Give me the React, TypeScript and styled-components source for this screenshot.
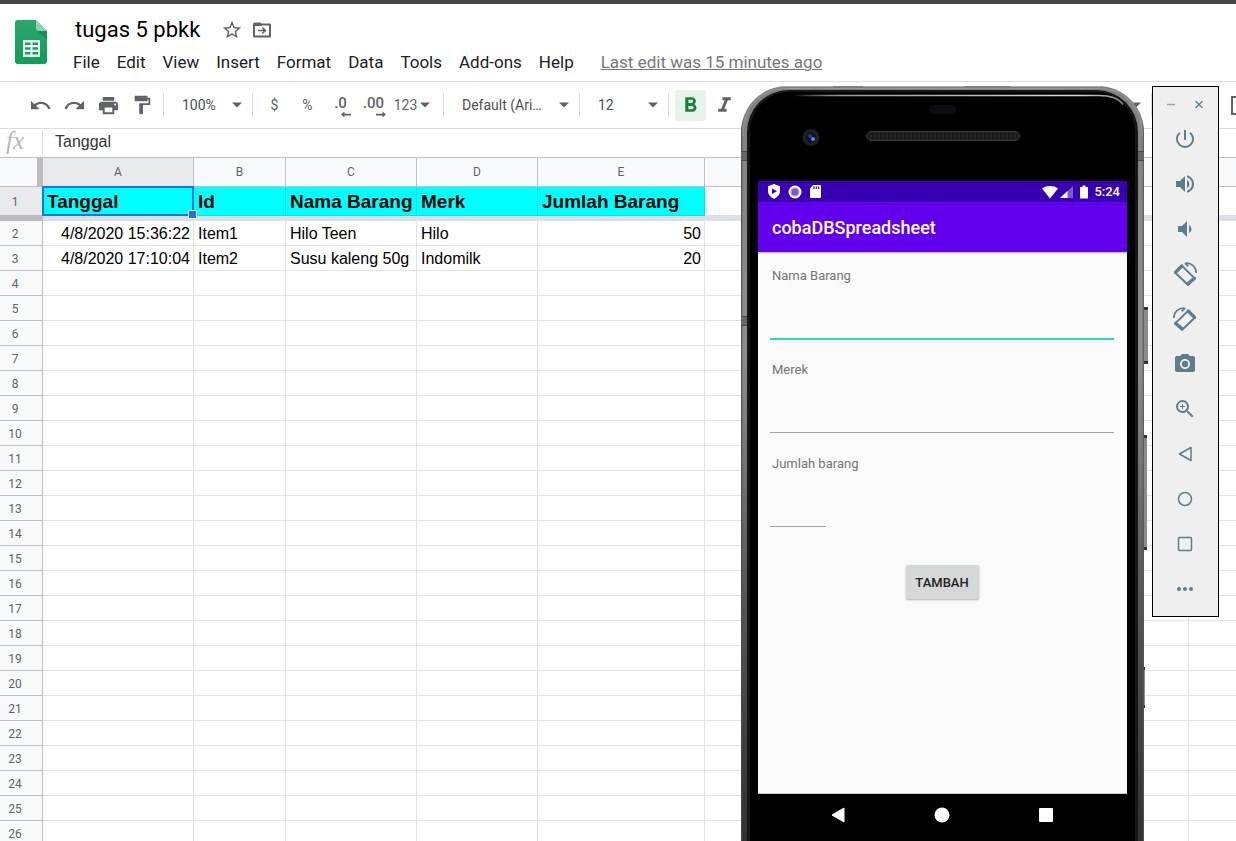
import React from "react";
import styled, { createGlobalStyle, css } from "styled-components";
import {
  MdUndo,
  MdRedo,
  MdPrint,
  MdFormatPaint,
  MdFormatBold,
  MdFormatItalic,
  MdStarBorder,
  MdPowerSettingsNew,
  MdVolumeUp,
  MdVolumeDown,
  MdPhotoCamera,
  MdZoomIn,
} from "react-icons/md";

const GlobalStyle = createGlobalStyle`
  *, *::before, *::after { box-sizing: border-box; }
  body { margin: 0; background: #fff; font-family: Roboto, "Liberation Sans", sans-serif; }
  button, input, select { font: inherit; color: inherit; margin: 0; padding: 0; border: 0; background: none; outline: 0; }
  svg { display: block; }
`;

const Page = styled.div`
  position: relative;
  display: flex;
  flex-direction: column;
  height: 100vh;
  overflow: hidden;
  border-top: 4px solid #444;
`;

/* ---------- header ---------- */

const Header = styled.header`
  display: flex;
  flex: none;
  height: 78px;
  padding: 12px 15px 0;
  gap: 26px;
  border-bottom: 1px solid #dadce0;
`;

const Logo = styled.svg`
  flex: none;
  width: 32px;
  height: 44px;
  margin-top: 4px;
`;

const HeaderText = styled.div`
  display: flex;
  flex-direction: column;
  gap: 4px;
`;

const TitleRow = styled.div`
  display: flex;
  align-items: center;
  height: 28px;
  gap: 9px;
`;

const Title = styled.h1`
  margin: 0 12px 0 2px;
  font-size: 22px;
  line-height: 28px;
  font-weight: 400;
  color: #000;
`;

const IconButton = styled.button`
  display: flex;
  align-items: center;
  justify-content: center;
  color: #5f6368;
`;

const MenuBar = styled.nav`
  display: flex;
  align-items: center;
  height: 28px;
  gap: 17px;
  white-space: nowrap;
`;

const MenuItem = styled.button`
  font-size: 17px;
  line-height: 28px;
  color: #202124;
`;

const LastEdit = styled.a`
  margin-left: 10px;
  font-size: 17px;
  line-height: 28px;
  color: #777;
  text-decoration: underline;
  text-decoration-thickness: 1px;
`;

/* ---------- toolbar ---------- */

const Toolbar = styled.div`
  display: flex;
  flex: none;
  align-items: center;
  height: 47px;
  padding-left: 23px;
  border-bottom: 1px solid #dadce0;
  font-size: 14px;
  color: #5f6368;
`;

const ToolButton = styled.button<{ $width?: number; $active?: boolean }>`
  display: flex;
  flex: none;
  align-items: center;
  justify-content: center;
  width: ${(p) => p.$width ?? 34}px;
  height: 31px;
  border-radius: 3px;
  gap: 3px;
  ${(p) =>
    p.$active &&
    css`
      background: #e6f4ea;
      color: #188038;
    `}
`;

const Divider = styled.span`
  flex: none;
  width: 1px;
  height: 24px;
  background: #dadce0;
`;

const ToolGroup = styled.div<{ $left?: number; $right?: number }>`
  display: flex;
  flex: none;
  align-items: center;
  padding: 0 ${(p) => p.$right ?? 0}px 0 ${(p) => p.$left ?? 0}px;
`;

const SelectBox = styled.label<{ $width: number }>`
  display: flex;
  flex: none;
  align-items: center;
  width: ${(p) => p.$width}px;
  padding: 0 10px 0 18px;
`;

const Select = styled.select`
  flex: 1;
  min-width: 0;
  appearance: none;
  font-size: 14px;
  line-height: 20px;
  color: #4d5156;
`;

const Decimals = styled.span<{ $overhang: number }>`
  display: flex;
  flex-direction: column;
  align-items: flex-end;
  height: 22px;
  margin-top: 4px;
  font-size: 15px;
  font-weight: 500;
  line-height: 15px;

  svg {
    margin-right: -${(p) => p.$overhang}px;
  }
`;

const RightTools = styled.div`
  display: flex;
  align-items: center;
  gap: 10px;
  margin-left: auto;
  margin-right: -14px;
`;

const Spacer = styled.span`
  width: 59px;
`;

const Arrow = () => (
  <svg width="10" height="6" viewBox="0 0 10 6" fill="#5f6368" aria-hidden="true">
    <path d="M0 .5h10L5 5.5z" />
  </svg>
);

/* ---------- formula bar ---------- */

const FormulaBar = styled.label`
  display: flex;
  flex: none;
  align-items: center;
  height: 29px;
  border-bottom: 1px solid #c0c0c0;
`;

const Fx = styled.span`
  width: 42px;
  padding: 0 0 4px 6px;
  font: italic 25px/24px "Liberation Serif", serif;
  color: #b7b9bc;
`;

const FormulaInput = styled.input`
  flex: 1;
  padding: 0 0 2px 12px;
  font: 16px/20px "Liberation Sans", sans-serif;
  color: #333;
`;

/* ---------- sheet ---------- */

const Sheet = styled.main`
  flex: 1;
  min-height: 0;
  overflow: hidden;
`;

const Table = styled.table`
  width: 100%;
  table-layout: fixed;
  border-collapse: separate;
  border-spacing: 0;
  white-space: nowrap;
`;

const headCell = css`
  padding: 0;
  font: 12px/14px Roboto, "Liberation Sans", sans-serif;
  color: #5f6368;
  text-align: center;
  border-right: 1px solid #c0c0c0;
`;

const ColHead = styled.th<{ $selected?: boolean }>`
  ${headCell}
  height: 29px;
  border-bottom: 1px solid #c0c0c0;
  background: ${(p) => (p.$selected ? "#e8eaed" : "#f8f9fa")};

  &:last-child {
    border-right: 0;
  }
`;

const Corner = styled.td`
  height: 29px;
  background: #f8f9fa;
  border-right: 6px solid #bcbcbc;
  border-bottom: 1px solid #c0c0c0;
`;

const RowHead = styled.th<{ $selected?: boolean }>`
  ${headCell}
  height: ${(p) => (p.$selected ? 29 : 25)}px;
  padding: 2px 12px 0 0;
  border-bottom: 1px solid ${(p) => (p.$selected ? "#bcbcbc" : "#c0c0c0")};
  background: ${(p) => (p.$selected ? "#e8eaed" : "#f8f9fa")};
`;

const Cell = styled.td<{ $right?: boolean }>`
  padding: 2px 3px 0 4px;
  font: 16px/20px "Liberation Sans", sans-serif;
  color: #000;
  text-align: ${(p) => (p.$right ? "right" : "left")};
  border-right: 1px solid #e2e2e2;
  border-bottom: 1px solid #e2e2e2;

  &:last-child {
    border-right: 0;
  }
`;

const TitleCell = styled(Cell)`
  position: relative;
  font-size: 19px;
  font-weight: 700;
  line-height: 22px;
  background: #0ff;
  border-color: #00e4e6;
`;

const FirstRowCell = styled(Cell)`
  border-right-color: #fff;
  border-bottom-color: #dadfe8;
`;

const Selection = styled.span`
  position: absolute;
  inset: -1px -1px -1px -1px;
  z-index: 1;
  border: 2px solid #1a73e8;

  &::after {
    content: "";
    position: absolute;
    right: -5px;
    bottom: -5px;
    width: 9px;
    height: 9px;
    background: #1a73e8;
    border: 1px solid #fff;
  }
`;

const FreezeBar = styled.td<{ $head?: boolean }>`
  height: 5px;
  padding: 0;
  background: ${(p) => (p.$head ? "#bcbcbc" : "#dadfe8")};
`;

/* ---------- emulator ---------- */

const Emulator = styled.aside`
  position: absolute;
  top: 82px;
  right: 17px;
  bottom: 0;
  z-index: 2;
  display: flex;
  align-items: flex-start;
  gap: 8px;
`;

const Phone = styled.section`
  position: relative;
  width: 403px;
  height: 100%;
`;

const SideButton = styled.span<{ $top: number; $height: number; $width: number }>`
  position: absolute;
  left: 100%;
  top: ${(p) => p.$top}px;
  width: ${(p) => p.$width}px;
  height: ${(p) => p.$height}px;
  background: #8c8c8c;
  border: solid #333;
  border-width: 3px 0;
`;

const Antenna = styled.span<{ $top: number; $side: "left" | "right" }>`
  position: absolute;
  top: ${(p) => p.$top}px;
  ${(p) => p.$side}: 0;
  width: 6px;
  height: 10px;
  background: #666;
  border: solid #4a4a4a;
  border-width: 1px 0;
`;

const Frame = styled.div`
  height: 100%;
  padding: 4px 6px 0;
  border-radius: 46px 46px 0 0;
  background: linear-gradient(90deg, #4a4a4a 0, transparent 2px, transparent 401px, #555 403px),
    linear-gradient(#808080 0, #8e8e8e 35%, #5a5a5a 65%, #303030 100%);
`;

const Body = styled.div`
  height: 100%;
  padding: 0 8px;
  border: solid #161616;
  border-width: 2px 3px 0;
  border-radius: 42px 42px 0 0;
  background: #000;
`;

const PhoneTop = styled.svg`
  position: absolute;
  top: 0;
  left: 0;
`;

const Screen = styled.div`
  display: flex;
  flex-direction: column;
  margin-top: 89px;
  background: #fafafa;
`;

const StatusBar = styled.div`
  display: flex;
  align-items: center;
  height: 21px;
  padding: 0 7px 0 9px;
  background: #3700b3;
  color: #fff;
  font-size: 13px;
  font-weight: 500;
`;

const StatusLeft = styled.div`
  display: flex;
  flex: 1;
  align-items: center;
  gap: 7px;
`;

const Clock = styled.time`
  margin-left: 5px;
`;

const AppBar = styled.div`
  height: 50px;
  padding-left: 14px;
  background: #6200ee;
  box-shadow: 0 1px 2px rgba(0, 0, 0, 0.3);
  color: #fff;
`;

const AppTitle = styled.h2`
  margin: 0;
  font-size: 18px;
  font-weight: 500;
  line-height: 52px;
`;

const Form = styled.form`
  display: flex;
  flex-direction: column;
  align-items: flex-start;
  height: 542px;
  gap: 22px;
  padding: 16px 13px 0 12px;
  border-bottom: 1px solid #ccc;
`;

const Field = styled.label<{ $short?: boolean }>`
  display: flex;
  flex-direction: column;
  width: ${(p) => (p.$short ? "56px" : "100%")};
  font-size: 13px;
  line-height: 16px;
  color: #757575;
  white-space: nowrap;
`;

const FieldText = styled.span`
  padding-left: 2px;
`;

const FieldInput = styled.input<{ $focused?: boolean }>`
  width: 100%;
  height: ${(p) => (p.$focused ? 56 : 55)}px;
  margin-bottom: ${(p) => (p.$focused ? 0 : 1)}px;
  border-bottom: ${(p) => (p.$focused ? "2px solid #20dccb" : "1px solid #a3a3a3")};
`;

const AddButton = styled.button`
  align-self: center;
  width: 73px;
  height: 34px;
  margin-top: 15px;
  border-radius: 2px;
  background: #d6d7d7;
  box-shadow: 0 1px 2px rgba(0, 0, 0, 0.3);
  color: #222;
  font-size: 13px;
  font-weight: 500;
`;

const NavBar = styled.div`
  display: flex;
  justify-content: center;
  height: 60px;
  padding: 0 1px 18px 0;
  background: #000;
`;

const NavButton = styled.button`
  display: flex;
  align-items: center;
  justify-content: center;
  width: 104px;
`;

const EmulatorTools = styled.div`
  display: flex;
  flex-direction: column;
  width: 67px;
  padding: 0 1px 5px 0;
  border: 1px solid #000;
  background: #efefef;
  color: #607d8b;
`;

const WindowButtons = styled.div`
  display: flex;
  justify-content: center;
  height: 29px;
  padding-top: 4px;
`;

const WindowButton = styled.button`
  display: flex;
  align-items: center;
  justify-content: center;
  width: 28px;
`;

const EmulatorButton = styled.button`
  display: flex;
  align-items: center;
  justify-content: center;
  height: 45px;
`;

const RotateIcon = ({ mirrored }: { mirrored?: boolean }) => (
  <svg width="24" height="24" viewBox="0 0 24 24" fill="none" stroke="currentColor">
    <g transform={mirrored ? "translate(24 0) scale(-1 1)" : undefined}>
      <path d="M2 10.5 8.8 3.6 22 16.6l-7.2 6.2z" strokeWidth="2" strokeLinejoin="round" />
      <path d="M2.5 10.3 8.8 4M15 21.800l6.300-5.600" strokeWidth="3.200" strokeLinecap="round" />
      <path d="M12.500 1.200c6-.6 10.600 3.800 10.700 9.800M11.800 1.200l3.600 3.200" strokeWidth="1.600" />
    </g>
  </svg>
);

const columns = ["A", "B", "C", "D", "E", "", "", "", "", ""];
const columnWidths = [43, 151, 92, 131, 121, 167, 121, 121, 121, 121];
const titles = ["Tanggal", "Id", "Nama Barang", "Merk", "Jumlah Barang"];
const records: string[][] = [
  ["4/8/2020 15:36:22", "Item1", "Hilo Teen", "Hilo", "50"],
  ["4/8/2020 17:10:04", "Item2", "Susu kaleng 50g", "Indomilk", "20"],
];
const menus = ["File", "Edit", "View", "Insert", "Format", "Data", "Tools", "Add-ons", "Help"];

const SheetsLogo = () => (
  <Logo viewBox="0 0 32 44" aria-label="Sheets">
    <defs>
      <linearGradient id="sheet" x1="0" y1="0" x2="0" y2="1">
        <stop offset="0" stopColor="#2aa86b" />
        <stop offset="1" stopColor="#109d58" />
      </linearGradient>
    </defs>
    <path d="M3 0h18l11 11v30a3 3 0 0 1-3 3H3a3 3 0 0 1-3-3V3a3 3 0 0 1 3-3z" fill="url(#sheet)" />
    <path d="M22 11h10v9z" fill="#1b8c57" />
    <path d="M21 0l11 11h-8a3 3 0 0 1-3-3z" fill="#8ed1b1" />
    <path
      fillRule="evenodd"
      d="M8 20h17v17H8zM10 22.500v2.500h5.500v-2.500zM17.500 22.500v2.500H23v-2.500zM10 27.300v2.500h5.500v-2.500zM17.500 27.300v2.500H23v-2.500zM10 32.100v2.500h5.500v-2.500zM17.500 32.100v2.500H23v-2.500z"
      fill="#f1f5f2"
    />
  </Logo>
);

const PhoneTopDrawing = () => (
  <PhoneTop width="403" height="95" viewBox="0 0 403 95" aria-hidden="true">
    <defs>
      <linearGradient id="shine" gradientUnits="userSpaceOnUse" x1="52" y1="0" x2="386" y2="0">
        <stop offset="0" stopColor="#fff" stopOpacity="0" />
        <stop offset=".15" stopColor="#999" />
        <stop offset=".85" stopColor="#ddd" />
        <stop offset="1" stopColor="#777" />
      </linearGradient>
      <pattern id="mesh" width="4" height="4" patternUnits="userSpaceOnUse">
        <rect width="4" height="4" fill="#1c1a17" />
        <rect x="1" y="1" width="2" height="2" fill="#2e2b26" />
      </pattern>
    </defs>
    <path
      d="M2 50C2 20 20 2.500 46 2.500H357C383 2.500 401 20 401 50"
      fill="none"
      stroke="#b0b0b0"
      strokeOpacity=".5"
    />
    <path d="M42 .5h50M122 .5h102M270 .5h90" stroke="#aaa" />
    <path d="M52 9.500H358c11 0 19 2 24 9" fill="none" stroke="url(#shine)" strokeWidth="1.300" />
    <rect x="188" y="19" width="27" height="9" rx="4.500" fill="#0b0b12" />
    <rect x="125.500" y="45.500" width="153" height="9" rx="4.500" fill="url(#mesh)" stroke="#3a3a38" />
    <circle cx="70" cy="51.500" r="8.500" fill="#1f2022" />
    <circle cx="70" cy="51.500" r="5" fill="#0b1030" />
    <circle cx="69" cy="50" r="2" fill="#263c8c" />
    <circle cx="72" cy="53" r="2" fill="#6a86e0" />
  </PhoneTop>
);

export default function App() {
  return (
    <Page>
      <GlobalStyle />
      <Header>
        <SheetsLogo />
        <HeaderText>
          <TitleRow>
            <Title>tugas 5 pbkk</Title>
            <IconButton aria-label="Star">
              <MdStarBorder size={22} />
            </IconButton>
            <IconButton aria-label="Move">
              <svg width="20" height="20" viewBox="0 0 20 20" fill="none" stroke="currentColor" strokeWidth="2">
                <path d="M2 4.500h16v12H2z" strokeLinejoin="round" />
                <path d="M2 3h6.500l1.500 2.500H2z" fill="currentColor" strokeWidth="1" />
                <path d="M6 10.500h7M10.300 7.500l3 3-3 3" strokeWidth="1.600" />
              </svg>
            </IconButton>
          </TitleRow>
          <MenuBar>
            {menus.map((m) => (
              <MenuItem key={m}>{m}</MenuItem>
            ))}
            <LastEdit href="#history">Last edit was 15 minutes ago</LastEdit>
          </MenuBar>
        </HeaderText>
      </Header>

      <Toolbar>
        <ToolGroup $right={4}>
          <ToolButton aria-label="Undo"><MdUndo size={23} /></ToolButton>
          <ToolButton aria-label="Redo"><MdRedo size={23} /></ToolButton>
          <ToolButton aria-label="Print"><MdPrint size={23} /></ToolButton>
          <ToolButton aria-label="Paint format"><MdFormatPaint size={22} /></ToolButton>
        </ToolGroup>
        <Divider />
        <SelectBox $width={88}>
          <Select aria-label="Zoom"><option>100%</option></Select>
          <Arrow />
        </SelectBox>
        <Divider />
        <ToolGroup $left={5} $right={9}>
          <ToolButton $width={33}>$</ToolButton>
          <ToolButton $width={33}>%</ToolButton>
          <ToolButton $width={33} aria-label="Decrease decimal places">
            <Decimals $overhang={4}>
              .0
              <svg width="10" height="7" viewBox="0 0 10 7" fill="currentColor">
                <path d="M0 3.500 3.500.5v2.200H10v1.800H3.500v2z" />
              </svg>
            </Decimals>
          </ToolButton>
          <ToolButton $width={33} aria-label="Increase decimal places">
            <Decimals $overhang={2}>
              .00
              <svg width="10" height="7" viewBox="0 0 10 7" fill="currentColor">
                <path d="M10 3.500 6.500.5v2.200H0v1.800h6.500v2z" />
              </svg>
            </Decimals>
          </ToolButton>
          <ToolButton $width={44}>
            123
            <Arrow />
          </ToolButton>
        </ToolGroup>
        <Divider />
        <SelectBox $width={135}>
          <Select aria-label="Font"><option>Default (Ari…</option></Select>
          <Arrow />
        </SelectBox>
        <Divider />
        <SelectBox $width={88}>
          <Select aria-label="Font size"><option>12</option></Select>
          <Arrow />
        </SelectBox>
        <Divider />
        <ToolGroup $left={6}>
          <ToolButton $width={31} $active aria-label="Bold"><MdFormatBold size={25} /></ToolButton>
          <ToolButton $width={36} aria-label="Italic"><MdFormatItalic size={25} /></ToolButton>
        </ToolGroup>
        <RightTools>
          <Arrow />
          <Divider />
          <Spacer />
          <IconButton aria-label="Borders">
            <svg width="19" height="19" viewBox="0 0 19 19" fill="none" stroke="currentColor" strokeWidth="2">
              <path d="M1 1h17v17H1z" />
            </svg>
          </IconButton>
        </RightTools>
      </Toolbar>

      <FormulaBar>
        <Fx>fx</Fx>
        <Divider />
        <FormulaInput defaultValue="Tanggal" />
      </FormulaBar>

      <Sheet>
        <Table>
          <colgroup>
            {columnWidths.map((w, i) => (
              <col key={i} width={w} />
            ))}
            <col />
          </colgroup>
          <thead>
            <tr>
              <Corner />
              {columns.map((c, i) => (
                <ColHead key={i} scope="col" $selected={i === 0}>{c}</ColHead>
              ))}
            </tr>
          </thead>
          <tbody>
            <tr>
              <RowHead scope="row" $selected>1</RowHead>
              {titles.map((t, i) => (
                <TitleCell key={t}>
                  {t}
                  {i === 0 && <Selection />}
                </TitleCell>
              ))}
              {columns.slice(5).map((_, i) => (
                <FirstRowCell key={i} />
              ))}
            </tr>
            <tr>
              <FreezeBar $head />
              <FreezeBar colSpan={columns.length} />
            </tr>
            {Array.from({ length: 25 }, (_, r) => (
              <tr key={r}>
                <RowHead scope="row">{r + 2}</RowHead>
                {columns.map((_, c) => (
                  <Cell key={c} $right={c === 0 || c === 4}>{records[r]?.[c]}</Cell>
                ))}
              </tr>
            ))}
          </tbody>
        </Table>
      </Sheet>

      <Emulator>
        <Phone>
          <Frame>
            <Body>
              <Screen>
                <StatusBar>
                  <StatusLeft>
                    <svg width="14" height="15" viewBox="0 0 14 15">
                      <path d="M7 0l6 2.300v4.500c0 3.800-2.500 6.600-6 8-3.500-1.400-6-4.200-6-8V2.300z" fill="#fff" />
                      <path d="M5 4.500v5.500l5-2.700z" fill="#3700b3" />
                    </svg>
                    <svg width="14" height="14" viewBox="0 0 14 14">
                      <circle cx="7" cy="7" r="6.500" fill="#fff" />
                      <circle cx="7" cy="7" r="4.500" fill="#b39ae0" />
                      <circle cx="7" cy="7" r="3.300" fill="#7d57cc" />
                    </svg>
                    <svg width="12" height="13" viewBox="0 0 12 13">
                      <path d="M4 0h7a1 1 0 0 1 1 1v11a1 1 0 0 1-1 1H2a1 1 0 0 1-1-1V3.500z" fill="#fff" />
                      <path d="M5 1.500v2.500M7.300 1.500v2.500M9.600 1.500v2.500" stroke="#3700b3" strokeWidth="1.200" />
                    </svg>
                  </StatusLeft>
                  <svg width="47" height="14" viewBox="0 0 47 14" fill="#fff">
                    <path d="M0 3.500C4.500.2 11.500.2 16 3.500L8 13.500z" />
                    <path d="M31 1v12H18z" fillOpacity=".35" />
                    <path d="M25.500 6v7H18z" />
                    <path d="M38 2h2.500V.5h3V2H46v11.500h-8z" />
                  </svg>
                  <Clock>5:24</Clock>
                </StatusBar>
                <AppBar>
                  <AppTitle>cobaDBSpreadsheet</AppTitle>
                </AppBar>
                <Form onSubmit={(e) => e.preventDefault()}>
                  <Field>
                    <FieldText>Nama Barang</FieldText>
                    <FieldInput $focused />
                  </Field>
                  <Field>
                    <FieldText>Merek</FieldText>
                    <FieldInput />
                  </Field>
                  <Field $short>
                    <FieldText>Jumlah barang</FieldText>
                    <FieldInput />
                  </Field>
                  <AddButton type="submit">TAMBAH</AddButton>
                </Form>
                <NavBar>
                  <NavButton aria-label="Back">
                    <svg width="14" height="16" viewBox="0 0 14 16"><path d="M13 1v14L1 8z" fill="#fff" stroke="#fff" strokeLinejoin="round" /></svg>
                  </NavButton>
                  <NavButton aria-label="Home">
                    <svg width="16" height="16" viewBox="0 0 16 16"><circle cx="8" cy="8" r="7.500" fill="#fff" /></svg>
                  </NavButton>
                  <NavButton aria-label="Overview">
                    <svg width="14" height="14" viewBox="0 0 14 14"><rect width="14" height="14" rx="1" fill="#fff" /></svg>
                  </NavButton>
                </NavBar>
              </Screen>
            </Body>
          </Frame>
          <PhoneTopDrawing />
          <Antenna $top={65} $side="left" />
          <Antenna $top={65} $side="right" />
          <Antenna $top={230} $side="left" />
          <SideButton $top={221} $height={57} $width={4} />
          <SideButton $top={349} $height={115} $width={3} />
          <SideButton $top={581} $height={41} $width={1} />
        </Phone>
        <EmulatorTools>
          <WindowButtons>
            <WindowButton aria-label="Minimize">
              <svg width="8" height="8" viewBox="0 0 8 8" stroke="#90a4ae" strokeWidth="1.500"><path d="M0 4.500h8" /></svg>
            </WindowButton>
            <WindowButton aria-label="Close">
              <svg width="8" height="8" viewBox="0 0 8 8" stroke="#607d8b" strokeWidth="1.300"><path d="M.5 1l7 7M7.500 1l-7 7" /></svg>
            </WindowButton>
          </WindowButtons>
          <EmulatorButton aria-label="Power"><MdPowerSettingsNew size={24} /></EmulatorButton>
          <EmulatorButton aria-label="Volume up"><MdVolumeUp size={24} /></EmulatorButton>
          <EmulatorButton aria-label="Volume down"><MdVolumeDown size={24} /></EmulatorButton>
          <EmulatorButton aria-label="Rotate left"><RotateIcon /></EmulatorButton>
          <EmulatorButton aria-label="Rotate right"><RotateIcon mirrored /></EmulatorButton>
          <EmulatorButton aria-label="Take screenshot"><MdPhotoCamera size={24} /></EmulatorButton>
          <EmulatorButton aria-label="Zoom"><MdZoomIn size={24} /></EmulatorButton>
          <EmulatorButton aria-label="Back">
            <svg width="16" height="16" viewBox="0 0 16 16" fill="none" stroke="currentColor" strokeWidth="1.500"><path d="M14 1.500v13L2.500 8z" strokeLinejoin="round" /></svg>
          </EmulatorButton>
          <EmulatorButton aria-label="Home">
            <svg width="16" height="16" viewBox="0 0 16 16" fill="none" stroke="currentColor" strokeWidth="1.500"><circle cx="8" cy="8" r="6.500" /></svg>
          </EmulatorButton>
          <EmulatorButton aria-label="Overview">
            <svg width="16" height="16" viewBox="0 0 16 16" fill="none" stroke="currentColor" strokeWidth="1.500"><rect x="1.500" y="1.500" width="13" height="13" rx="1" /></svg>
          </EmulatorButton>
          <EmulatorButton aria-label="More">
            <svg width="16" height="4" viewBox="0 0 16 4" fill="currentColor">
              <circle cx="2" cy="2" r="2" />
              <circle cx="8" cy="2" r="2" />
              <circle cx="14" cy="2" r="2" />
            </svg>
          </EmulatorButton>
        </EmulatorTools>
      </Emulator>
    </Page>
  );
}
